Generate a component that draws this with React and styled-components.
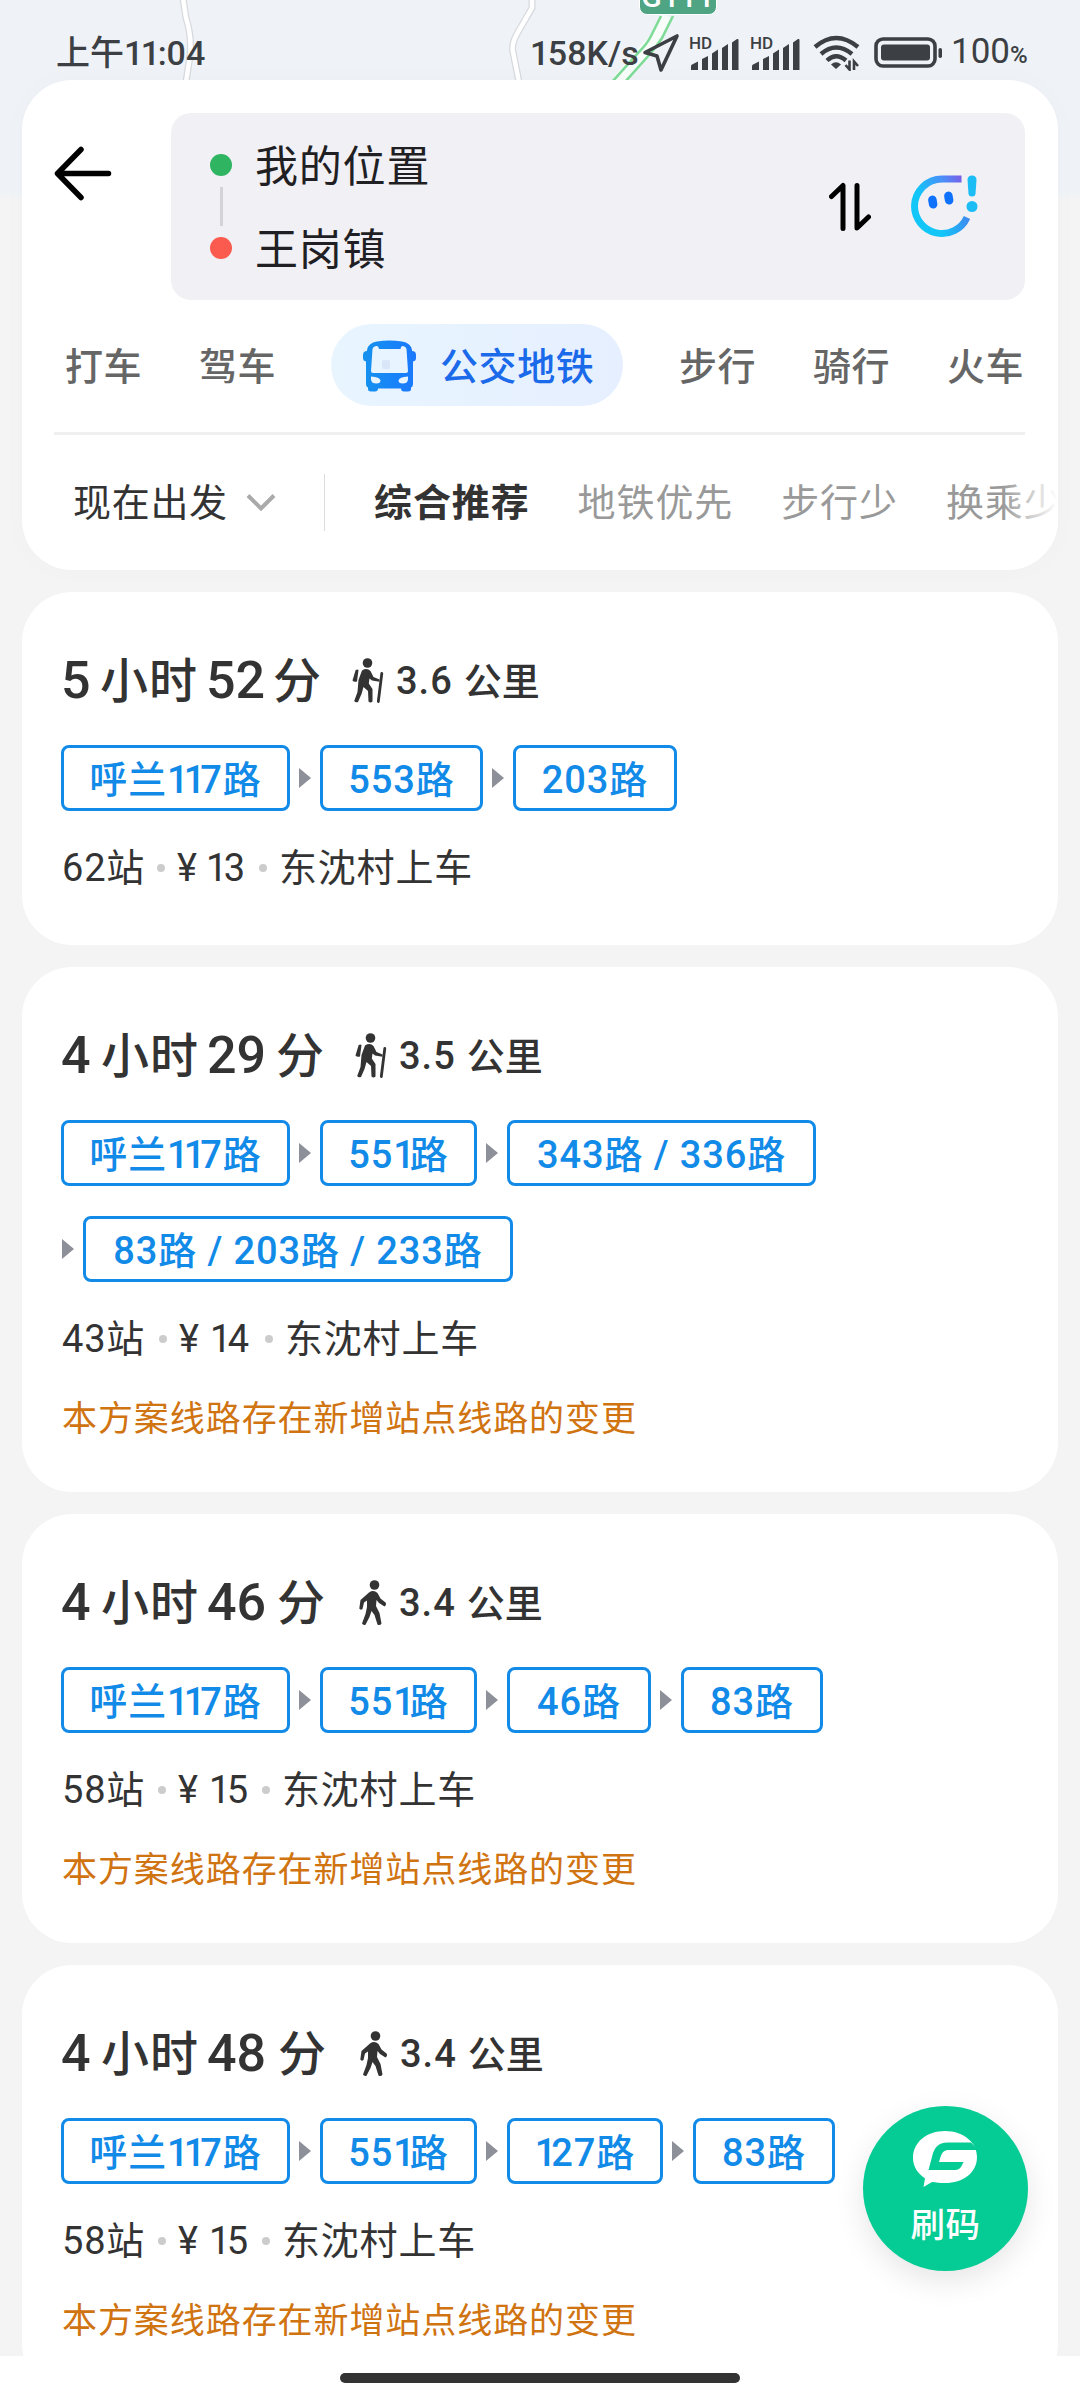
import React from "react";
import styled, { createGlobalStyle } from "styled-components";

const GlobalStyle = createGlobalStyle`
  * { box-sizing: border-box; }
  body { margin: 0; background: #f4f4f4; }
`;

const Screen = styled.div`
  position: relative;
  display: flex;
  flex-direction: column;
  width: 1080px;
  height: 2400px;
  overflow: hidden;
  background: linear-gradient(#eff3f7 0, #eff3f7 192px, #f4f4f4 200px);
  font-family: Roboto, "Noto Sans CJK SC", sans-serif;
  color: #333;
  white-space: nowrap;
`;

const MapBackdrop = styled.svg`
  position: absolute;
  top: 0;
  left: 0;
`;

const RoadBadge = styled.div`
  position: absolute;
  left: 639px;
  top: -26px;
  width: 78px;
  height: 41px;
  border: 1px solid #fff;
  border-radius: 8px;
  background: #4fa583;
  color: #fff;
  font-size: 30px;
  font-weight: 500;
  line-height: 43px;
  letter-spacing: 0.5px;
  text-align: center;
`;

const StatusBar = styled.div`
  position: relative;
  display: flex;
  align-items: center;
  flex: none;
  height: 80px;
  padding: 26px 0 0 56px;
  color: #3c3f43;
`;

const Clock = styled.span`
  flex: none;
  width: 472px;
  font-size: 34px;
  font-weight: 500;
  line-height: 56px;
`;

const Speed = styled.span`
  flex: none;
  width: 114px;
  padding-left: 2px;
  font-size: 34px;
  font-weight: 500;
  line-height: 54px;
`;

const StatusIcon = styled.svg`
  flex: none;
  margin-left: ${(p) => p.$gap || 0}px;
`;

const Signal = styled.div`
  position: relative;
  flex: none;
  width: 51px;
  height: 34px;
  margin-left: ${(p) => p.$gap}px;
`;

const HdLabel = styled.span`
  position: absolute;
  left: 0;
  top: -1px;
  font-size: 17px;
  font-weight: 500;
  line-height: 16px;
`;

const BarsSvg = styled.svg`
  position: absolute;
  left: 2px;
  top: 2px;
`;

const Percent = styled.span`
  margin-left: 7px;
  font-size: 35px;
  line-height: 56px;
  small { font-size: 24px; font-weight: 500; letter-spacing: 0; }
`;

const HeaderCard = styled.div`
  position: relative;
  flex: none;
  display: flex;
  flex-direction: column;
  width: 1036px;
  height: 490px;
  margin: 0 22px;
  padding-top: 33px;
  border-radius: 50px;
  background: #fff;
  box-shadow: 0 0 30px rgba(0, 0, 0, 0.02);
`;

const SearchRow = styled.div`
  display: flex;
  padding: 0 33px 0 32px;
`;

const BackButton = styled.div`
  flex: none;
  width: 117px;
  padding-top: 33px;
`;

const SearchBox = styled.div`
  flex: 1;
  display: flex;
  align-items: center;
  height: 187px;
  padding: 0 47px 0 39px;
  border-radius: 20px;
  background: #f1f0f5;
`;

const DotRail = styled.div`
  display: flex;
  flex-direction: column;
  align-items: center;
  justify-content: space-between;
  width: 22px;
  height: 105px;
  margin-bottom: 1px;
`;

const Dot = styled.div`
  width: 22px;
  height: 22px;
  border-radius: 50%;
  background: ${(p) => p.$color};
`;

const Rail = styled.div`
  width: 3px;
  height: 39px;
  background: #d4d4d6;
`;

const Places = styled.div`
  flex: 1;
  display: flex;
  flex-direction: column;
  margin-left: 23px;
  padding-top: 5px;
  color: #1f1f24;
`;

const Place = styled.div`
  font-size: 43px;
  line-height: 83px;
  letter-spacing: 0.8px;
`;

const Tabs = styled.div`
  display: flex;
  align-items: center;
  height: 82px;
  margin-top: 24px;
  padding-left: 43px;
`;

const Tab = styled.div`
  width: 78px;
  margin-right: ${(p) => p.$after ?? 56}px;
  padding-top: 3px;
  font-size: 38px;
  font-weight: 500;
  line-height: 82px;
  letter-spacing: 0.6px;
  color: #666;
`;

const ActiveTab = styled.div`
  display: flex;
  align-items: center;
  width: 292px;
  height: 82px;
  margin-right: 56px;
  padding: 2px 0 0 32px;
  border-radius: 41px;
  background: linear-gradient(90deg, #e8f5ff, #e6efff);
`;

const ActiveLabel = styled.span`
  margin: 2px 0 0 24px;
  font-size: 38px;
  font-weight: 500;
  line-height: 80px;
  letter-spacing: 0.6px;
  color: #1a6aea;
`;

const Divider = styled.div`
  flex: none;
  height: 3px;
  margin: 26px 33px 0 32px;
  background: #efefef;
`;

const Filters = styled.div`
  position: relative;
  display: flex;
  align-items: center;
  height: 135px;
  padding: 0 0 0 51px;
  overflow: hidden;
  border-radius: 0 0 50px 50px;
  &::after {
    content: "";
    position: absolute;
    right: 0;
    top: 30px;
    width: 56px;
    height: 80px;
    background: linear-gradient(90deg, rgba(255, 255, 255, 0), #fff);
  }
`;

const Depart = styled.div`
  flex: none;
  display: flex;
  align-items: center;
  gap: 18px;
  width: 250px;
  font-size: 38px;
  line-height: 60px;
  letter-spacing: 0.7px;
`;

const FilterRule = styled.div`
  flex: none;
  width: 1px;
  height: 57px;
  margin: 0 49px 0 1px;
  background: #dcdcdc;
`;

const Filter = styled.div`
  flex: none;
  margin-right: 48px;
  font-size: 38px;
  font-weight: ${(p) => (p.$active ? 700 : 400)};
  line-height: 60px;
  letter-spacing: 0.9px;
  color: ${(p) => (p.$active ? "#333" : "#999")};
`;

const RouteCard = styled.div`
  flex: none;
  display: flex;
  flex-direction: column;
  margin: 22px 22px 0;
  padding: 58px 0 ${(p) => (p.$noted ? 54 : 52)}px 39px;
  border-radius: 50px;
  background: #fff;
`;

const Title = styled.div`
  display: flex;
  align-items: center;
  height: 60px;
  padding-top: 1px;
  font-weight: 500;
  line-height: 62px;
`;

const BigNumber = styled.span`
  width: ${(p) => p.$width}px;
  font-size: 52px;
`;

const BigUnit = styled.span`
  width: ${(p) => p.$width}px;
  padding-top: 2px;
  font-size: 48px;
  letter-spacing: 1px;
`;

const WalkIcon = styled.svg`
  flex: none;
  margin: 0 ${(p) => p.$after}px 0 0;
`;

const Distance = styled.span`
  font-size: 38px;
  letter-spacing: 1px;
`;

const DistanceUnit = styled.span`
  margin-left: 11px;
  padding-top: 2px;
  font-size: 38px;
`;

const TagRows = styled.div`
  display: flex;
  flex-direction: column;
  gap: 30px;
  margin-top: 35px;
`;

const TagRow = styled.div`
  display: flex;
  align-items: center;
  gap: 9px;
  height: 66px;
`;

const Arrow = styled.div`
  width: 0;
  margin: 0 0 0 ${(p) => (p.$leading ? 1 : 0)}px;
  border: solid transparent;
  border-width: 10px 0 10px 12px;
  border-left-color: #8d8f99;
`;

const Tag = styled.div`
  width: ${(p) => p.$width}px;
  height: 66px;
  border: 3px solid #128ae8;
  border-radius: 8px;
  font-size: 38px;
  font-weight: 500;
  line-height: 64px;
  letter-spacing: 0.9px;
  text-align: center;
  color: #128ae8;
`;

const NarrowOne = styled.span`
  letter-spacing: ${(p) => -p.$trim}px;
`;

const Info = styled.div`
  display: flex;
  align-items: center;
  height: 50px;
  margin-top: 32px;
  padding-left: 1px;
  font-size: 38px;
  line-height: 54px;
  letter-spacing: 0.8px;
`;

const Stops = styled.span`
  width: ${(p) => p.$width}px;
`;

const Price = styled.span`
  display: flex;
  width: ${(p) => p.$width}px;
`;

const Yen = styled.span`
  width: 31px;
`;

const MidDot = styled.span`
  width: 8px;
  height: 8px;
  margin: 0 ${(p) => p.$after}px 0 13px;
  border-radius: 50%;
  background: #ccc;
`;

const Note = styled.div`
  height: 40px;
  margin-top: 34px;
  padding-left: 1px;
  font-size: 35px;
  line-height: 43px;
  letter-spacing: 0.93px;
  color: #d07311;
`;

const Fab = styled.div`
  position: absolute;
  left: 863px;
  top: 2106px;
  display: flex;
  flex-direction: column;
  align-items: center;
  width: 165px;
  height: 165px;
  padding-top: 25px;
  border-radius: 50%;
  background: #05cb95;
  box-shadow: 0 10px 30px rgba(0, 0, 0, 0.1);
  color: #fff;
`;

const FabLabel = styled.span`
  margin-top: 11px;
  font-size: 34.5px;
  font-weight: 500;
  line-height: 50px;
  letter-spacing: 0.5px;
`;

const NavBar = styled.div`
  position: absolute;
  left: 0;
  bottom: 0;
  display: flex;
  justify-content: center;
  width: 1080px;
  height: 44px;
  padding-top: 17px;
  background: #fff;
`;

const HomeHandle = styled.div`
  width: 400px;
  height: 10px;
  border-radius: 5px;
  background: #333;
`;

function Digits({ text, trim }) {
  return text.split(/(1+)/).map((part, i) =>
    part.startsWith("1") ? <NarrowOne key={i} $trim={trim}>{part}</NarrowOne> : part
  );
}

function Backdrop() {
  return (
    <MapBackdrop width="1080" height="80" viewBox="0 0 1080 80" fill="none">
      <path d="M183 -2L186 18Q192 36 190 56L186 82" stroke="#d6d9dd" strokeWidth="7" />
      <path d="M183 -2L186 18Q192 36 190 56L186 82" stroke="#fff" strokeWidth="4.500" />
      <path d="M532 -2V8L518 32Q511 44 513 52L519 82" stroke="#d6d9dd" strokeWidth="7" />
      <path d="M532 -2V8L518 32Q511 44 513 52L519 82" stroke="#fff" strokeWidth="4.500" />
      <path d="M667 16L657 36Q653 43 645 50L618 82" stroke="#f8fdfa" strokeWidth="13" />
      <path d="M661 16L651 36Q647 44 639 52L612 82" stroke="#7fdc98" strokeWidth="2.600" />
      <path d="M673 16L662 38Q657 46 650 54L625 82" stroke="#7fdc98" strokeWidth="2.600" />
    </MapBackdrop>
  );
}

function SignalBars({ gap }) {
  return (
    <Signal $gap={gap}>
      <HdLabel>HD</HdLabel>
      <BarsSvg width="49" height="32" viewBox="0 0 49 32" fill="#3c3f43">
        <path d="M0 32v-4q0-1 1-1.500l6-3v8.500zM11 32v-11l6-3v14zM21 32v-16.500l6-4v20.500zM31 32v-22l6-4v26zM41 32v-27.500l5-3.500q1.500-.5 1.500 1v30z" />
      </BarsSvg>
    </Signal>
  );
}

function Status() {
  return (
    <StatusBar>
      <Clock><Digits text="上午11:04" trim={2.5} /></Clock>
      <Speed><Digits text="158K/s" trim={1.5} /></Speed>
      <StatusIcon width="38" height="40" viewBox="0 0 38 40" fill="none" stroke="#3c3f43" strokeWidth="3.600" strokeLinejoin="round">
        <path d="M35 3L19 37L15 23L3 19.500Z" />
      </StatusIcon>
      <SignalBars gap={9} />
      <SignalBars gap={10} />
      <StatusIcon $gap={12} width="48" height="36" viewBox="0 0 48 36" fill="none" stroke="#3c3f43" strokeWidth="4.400">
        <path d="M2 12Q23-6 45 12M8 19Q23 6 39 19M14 25.500Q23 17 33 25.500" />
        <path d="M23 34l-5-4.500q5-4.500 10 0z" fill="#3c3f43" stroke="none" />
        <path d="M36.500 25.500v9l-4-4.500M41 35v-8.500l4 4.500" strokeWidth="2.600" />
      </StatusIcon>
      <StatusIcon $gap={13} width="70" height="32" viewBox="0 0 70 32">
        <rect x="2" y="2" width="59" height="27" rx="7" fill="none" stroke="#3c3f43" strokeWidth="3.600" />
        <rect x="7" y="7.500" width="49" height="16" rx="3" fill="#3c3f43" />
        <rect x="64.500" y="11" width="3.500" height="10" rx="1.700" fill="#3c3f43" />
      </StatusIcon>
      <Percent>100<small>%</small></Percent>
    </StatusBar>
  );
}

function BusIcon() {
  return (
    <svg width="53" height="52" viewBox="0 0 53 52">
      <defs>
        <linearGradient id="bus" x1="0" y1="0" x2="1" y2="0">
          <stop offset="0" stopColor="#1592ee" />
          <stop offset="1" stopColor="#1a78ff" />
        </linearGradient>
      </defs>
      <path fill="url(#bus)" fillRule="evenodd" d="M14 1.500Q26 -.5 39 1.500Q48 3 49 10V11Q53 11 53 15V18Q53 21 50 21.500V43Q50 47 48 47.500V49Q48 51.500 45 51.500H41Q38 51.500 38 48.500H15Q15 51.500 12 51.500H8Q5 51.500 5 49V47.500Q3 47 3 43V21.500Q0 21 0 18V15Q0 11 4 11V10Q5 3 14 1.500ZM13 6Q10 6.500 9.500 9L8 31Q8 33 10 33H43Q45 33 45 31L43.500 9Q43 6.500 40 6Q38 5.500 37.500 9H16Q15.500 5.500 13 6ZM8 39Q8 43.500 13.500 43.500Q17.500 43.500 17.500 40.500Q17 37 8 36.500ZM45 36.500Q36 37 35.500 40.500Q35.500 43.500 39.500 43.500Q45 43.500 45 39Z" />
      <rect x="19" y="20" width="8" height="9" rx="2" fill="#d9e6f9" />
    </svg>
  );
}

function SwapIcon() {
  return (
    <svg width="42" height="50" viewBox="0 0 42 50" fill="none" stroke="#000" strokeWidth="5" strokeLinecap="round" strokeLinejoin="round">
      <path d="M2.500 14.500L14 3.500V46.500M28 3.500V46L39.500 35" />
    </svg>
  );
}

const AssistantSvg = styled.svg`
  margin-left: 40px;
`;

function AssistantIcon() {
  return (
    <AssistantSvg width="67" height="63" viewBox="0 0 67 63" fill="none">
      <defs>
        <linearGradient id="ringTop" gradientUnits="userSpaceOnUse" x1="8" y1="20" x2="52" y2="3">
          <stop offset="0" stopColor="#12c6f8" />
          <stop offset=".6" stopColor="#4b8df8" />
          <stop offset="1" stopColor="#7b5be6" />
        </linearGradient>
        <linearGradient id="ringBottom" gradientUnits="userSpaceOnUse" x1="30" y1="55" x2="60" y2="44">
          <stop offset="0" stopColor="#12c6f8" />
          <stop offset="1" stopColor="#4286ee" />
        </linearGradient>
      </defs>
      <path d="M3.500 31.200A27.500 27.500 0 0 1 31 4H50.500" stroke="url(#ringTop)" strokeWidth="7" />
      <path d="M3.500 31A27.500 27.500 0 0 0 56 42.500" stroke="url(#ringBottom)" strokeWidth="7" />
      <rect x="17.500" y="20.500" width="8.500" height="13" rx="4.250" transform="rotate(-10 22 27)" fill="#0f72ff" />
      <rect x="33.500" y="16.500" width="8.500" height="13" rx="4.250" transform="rotate(-10 38 23)" fill="#0f72ff" />
      <path d="M56.500 4.500Q57 .5 61 .5T65.500 4.500L64.500 19Q64 21.500 61 21.500T57.500 19Z" fill="#1cbdf5" />
      <circle cx="61" cy="31.500" r="5.500" fill="#1cbdf5" />
    </AssistantSvg>
  );
}

function Hiker({ after }) {
  return (
    <WalkIcon $after={after} width="32" height="46" viewBox="0 0 32 46" fill="#333">
      <circle cx="15.500" cy="5" r="4.800" />
      <path d="M3.500 12.500Q5 11 6.500 12L5 23.500Q2 24.500 .5 22.500Z" />
      <path d="M10 12.500Q15 9.500 18.500 13L21.500 19L27.500 21.500V23.800L20 22.500L17.500 20.500L16.800 25.500L20.500 31V43.500Q18.500 45.500 16.500 43.500L16 33L11.500 29L9.500 36L6 44Q3.500 45 2.200 43L5.500 34L6.500 22Z" />
      <path d="M29.800 15.500L26.300 43.500" stroke="#333" strokeWidth="2.800" strokeLinecap="round" />
    </WalkIcon>
  );
}

function Walker({ after }) {
  return (
    <WalkIcon $after={after} width="28" height="46" viewBox="0 0 28 46" fill="#333">
      <circle cx="15.500" cy="5" r="4.800" />
      <path d="M10 12.500Q14.500 9.500 18.500 13L21.500 18.500L26.500 22.500Q28 24.500 25.500 26.500L20 23L17.500 20L17 26L20.500 33L22.500 43.500Q21 46 18.500 44.500L15.500 35L12.500 31L10.500 37L6.500 44.800Q4 45.500 3 43.500L6.500 34L8 27V20.500L5 22.500L3.500 29Q1.500 30.500 .3 28.500L1.500 20Z" />
    </WalkIcon>
  );
}

const ROUTES = [
  {
    hours: "5", minutes: "52", km: "3.6", hiking: true,
    layout: { h: 39, unit: 106, m: 67, min: 79, after: 12 },
    rows: [[["呼兰117路", 229], ["553路", 163], ["203路", 164]]],
    stops: "62站", stopsWidth: 82, price: "13", priceWidth: 69,
  },
  {
    hours: "4", minutes: "29", km: "3.5", hiking: true,
    layout: { h: 40, unit: 106, m: 69, min: 79, after: 12 },
    rows: [
      [["呼兰117路", 229], ["551路", 157], ["343路 / 336路", 309]],
      [["83路 / 203路 / 233路", 430]],
    ],
    stops: "43站", stopsWidth: 84, price: "14", priceWidth: 73, noted: true,
  },
  {
    hours: "4", minutes: "46", km: "3.4",
    layout: { h: 40, unit: 106, m: 70, min: 82, after: 12 },
    rows: [[["呼兰117路", 229], ["551路", 157], ["46路", 144], ["83路", 142]]],
    stops: "58站", stopsWidth: 83, price: "15", priceWidth: 71, noted: true,
  },
  {
    hours: "4", minutes: "48", km: "3.4",
    layout: { h: 40, unit: 106, m: 71, min: 82, after: 12 },
    rows: [[["呼兰117路", 229], ["551路", 157], ["127路", 156], ["83路", 142]]],
    stops: "58站", stopsWidth: 83, price: "15", priceWidth: 71, noted: true,
  },
];

function Route({ route }) {
  const { layout } = route;
  const Icon = route.hiking ? Hiker : Walker;
  return (
    <RouteCard $noted={route.noted}>
      <Title>
        <BigNumber $width={layout.h}>{route.hours}</BigNumber>
        <BigUnit $width={layout.unit}>小时</BigUnit>
        <BigNumber $width={layout.m}>{route.minutes}</BigNumber>
        <BigUnit $width={layout.min}>分</BigUnit>
        <Icon after={layout.after} />
        <Distance>{route.km}</Distance>
        <DistanceUnit>公里</DistanceUnit>
      </Title>
      <TagRows>
        {route.rows.map((row, r) => (
          <TagRow key={r}>
            {row.map(([name, width], i) => (
              <React.Fragment key={name}>
                {(i > 0 || r > 0) && <Arrow $leading={i === 0} />}
                <Tag $width={width}><Digits text={name} trim={5} /></Tag>
              </React.Fragment>
            ))}
          </TagRow>
        ))}
      </TagRows>
      <Info>
        <Stops $width={route.stopsWidth}>{route.stops}</Stops>
        <MidDot $after={12} />
        <Price $width={route.priceWidth}>
          <Yen>¥</Yen>
          <span><Digits text={route.price} trim={3.5} /></span>
        </Price>
        <MidDot $after={12} />
        东沈村上车
      </Info>
      {route.noted && <Note>本方案线路存在新增站点线路的变更</Note>}
    </RouteCard>
  );
}

export default function App() {
  return (
    <Screen>
      <GlobalStyle />
      <Backdrop />
      <RoadBadge>G111</RoadBadge>
      <Status />
      <HeaderCard>
        <SearchRow>
          <BackButton>
            <svg width="58" height="56" viewBox="0 0 58 56" fill="none" stroke="#000" strokeWidth="5.500" strokeLinecap="round" strokeLinejoin="round">
              <path d="M27 3.500L3.500 27.500L27 51.500M4 27.500H54.500" />
            </svg>
          </BackButton>
          <SearchBox>
            <DotRail>
              <Dot $color="#2fb562" />
              <Rail />
              <Dot $color="#fb5a4e" />
            </DotRail>
            <Places>
              <Place>我的位置</Place>
              <Place>王岗镇</Place>
            </Places>
            <SwapIcon />
            <AssistantIcon />
          </SearchBox>
        </SearchRow>
        <Tabs>
          <Tab $after={56}>打车</Tab>
          <Tab $after={54}>驾车</Tab>
          <ActiveTab>
            <BusIcon />
            <ActiveLabel>公交地铁</ActiveLabel>
          </ActiveTab>
          <Tab>步行</Tab>
          <Tab>骑行</Tab>
          <Tab $after={0}>火车</Tab>
        </Tabs>
        <Divider />
        <Filters>
          <Depart>
            现在出发
            <svg width="30" height="20" viewBox="0 0 30 20" fill="none" stroke="#aaa" strokeWidth="4">
              <path d="M2 2.500L15 15.500L28 2.500" />
            </svg>
          </Depart>
          <FilterRule />
          <Filter $active>综合推荐</Filter>
          <Filter>地铁优先</Filter>
          <Filter>步行少</Filter>
          <Filter>换乘少</Filter>
        </Filters>
      </HeaderCard>
      {ROUTES.map((route, i) => (
        <Route key={i} route={route} />
      ))}
      <Fab>
        <svg width="65" height="58" viewBox="0 0 65 58">
          <path fill="#fff" d="M32 0C50 0 64 11 64 26C64 42 50 52 32 52C27 52 23 51.500 19 51L10.500 56L12 47.500C4 42 0 35 0 27C0 11 14 0 32 0Z" />
          <path fill="#05cb95" d="M58 11.500H35C24.500 11.500 21 17 19 26L15.500 39H43Q46 39 48 36L50.600 31H26L27.500 26C29 21.500 31 19 36 19H65Z" />
        </svg>
        <FabLabel>刷码</FabLabel>
      </Fab>
      <NavBar>
        <HomeHandle />
      </NavBar>
    </Screen>
  );
}
